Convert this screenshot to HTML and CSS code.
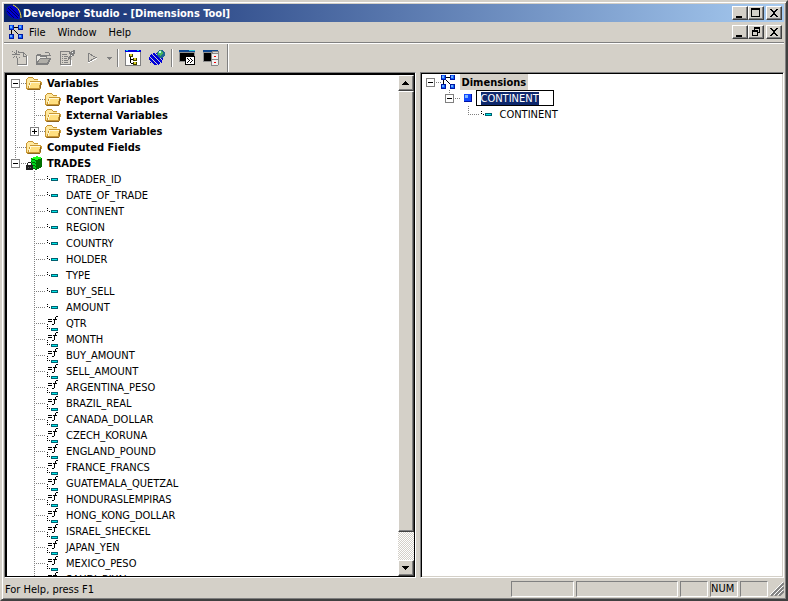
FILE: index.html
```html
<!DOCTYPE html>
<html lang="en">
<head>
    <meta charset="UTF-8">
    <meta name="viewport" content="width=device-width, initial-scale=1.0">
    <title>Developer Studio - [Dimensions Tool]</title>
    <link rel="stylesheet" href="styles.css">
</head>
<body>
    <!-- shared tree icons -->
    <svg class="sprite" aria-hidden="true">
        <symbol id="folder" viewBox="1 0 16 16">
            <path d="M1 14V4l2-2h4l2 2h4v2h2l2 1-1 6-1 2H2z" fill="#c89632"/>
            <path d="M2 13V4l1-1h4l2 2h4v1H5L3 13z" fill="#ffe9a0"/>
            <path d="M5 7h10l-1 6H4z" fill="#ffdf80"/>
            <path d="M5 7h10v1H6l-1 5H4z" fill="#fff8d8"/>
            <path d="M3 14h12v1H3zM15 8h1v5h-1z" fill="#8c6420"/>
        </symbol>
        <symbol id="dims" viewBox="0 -1 16 16">
            <path d="M5 2h5v1H5zM2 5h1v5H2zM5 5h1v1H5zM6 6h1v1H6zM7 7h1v1H7zM8 8h1v1H8zM9 9h1v1H9z" fill="#000"/>
            <path d="M0 0h5v5H0zM9 0h5v5H9zM0 9h5v5H0zM9 9h5v5H9z" fill="#0018a0"/>
            <path d="M1 0h3v4H1zM10 0h3v4h-3zM1 10h3v3H1zM10 10h3v3h-3z" fill="#1060ff"/>
            <path d="M1 1h2v2H1zM10 1h2v2h-2zM1 10h2v2H1zM10 10h2v2h-2z" fill="#68b0ff"/>
        </symbol>
        <symbol id="field" viewBox="0 0 16 16">
            <path d="M2 5h1v1H2zM2 7h1v1H2zM4 8h1v1H4z" fill="#000"/>
            <path d="M6 7h7v3H6z" fill="#006070"/>
            <path d="M7 8h5v1H7z" fill="#00e8e8"/>
        </symbol>
        <symbol id="func" viewBox="0 -1 16 16">
            <path d="M3 3h4v1H3zM3 5h4v1H3zM11 0h2v1h-2zM10 1h1v2h-1zM8 3h4v1H8zM9 4h1v4H9zM7 8h2v1H7zM2 8h1v1H2zM2 10h1v1H2zM2 12h1v1H2zM4 12h1v1H4z" fill="#000"/>
            <path d="M6 12h7v3H6z" fill="#006070"/>
            <path d="M7 13h5v1H7z" fill="#00e8e8"/>
        </symbol>
        <symbol id="trades" viewBox="0 0 16 16">
            <path d="M5 3l6-2 5 2v9l-6 3-5-2z" fill="#007000"/>
            <path d="M5 3l6-2 5 2-6 2z" fill="#20ff20"/>
            <path d="M5 4l5 2v2L5 6zM5 7l5 2v2L5 9zM5 10l5 2v2l-5-2z" fill="#00d820"/>
            <path d="M0 10h7v5H0zM1 8h1v2H1zM5 8h1v2H5zM2 7h3v1H2z" fill="#202020"/>
            <path d="M2 12h1v1H2zM4 12h1v1H4z" fill="#666"/>
        </symbol>
        <symbol id="cube" viewBox="0 0 16 16">
            <path d="M4 4h8v8H4z" fill="#0010a0"/>
            <path d="M4 4h7v7H4z" fill="#1048ff"/>
            <path d="M5 5h3v3H5z" fill="#80b8ff"/>
        </symbol>
        <symbol id="close" viewBox="0 0 12 10">
            <path d="M2 1h2v1h1v1h2V2h1V1h2v1H9v1H8v1H7v2h1v1h1v1h1v1H8V8H7V7H5v1H4v1H2V8h1V7h1V6h1V4H4V3H3V2H2z"/>
        </symbol>
        <symbol id="minimize" viewBox="0 0 12 10"><path d="M2 8h6v2H2z"/></symbol>
    </svg>

    <div class="window">
        <header class="titlebar">
            <svg class="app-icon" viewBox="0 0 18 18" aria-hidden="true">
                <path d="M2 4c2-4 8-3 11 2 2 4 2 8 1 9C7 15-1 11 2 4z" fill="#0000d0"/>
                <path d="M3 4l10 10M5 3l9 9M2 7l7 7" stroke="#000058"/>
                <path d="M8 1c5 2 8 7 8 13" stroke="#ffe040" fill="none"/>
            </svg>
            <h1>Developer Studio - [Dimensions Tool]</h1>
            <div class="window-buttons">
                <button class="raised" aria-label="Minimize"><svg><use href="#minimize"/></svg></button>
                <button class="raised" aria-label="Maximize"><svg viewBox="0 0 12 10"><path d="M1 0h9v9H1zM2 2v6h7V2z" fill-rule="evenodd"/></svg></button>
                <button class="raised close" aria-label="Close"><svg><use href="#close"/></svg></button>
            </div>
        </header>

        <nav class="menubar">
            <svg class="menu-icon" aria-hidden="true"><use href="#dims"/></svg>
            <a href="#">File</a>
            <a href="#">Window</a>
            <a href="#">Help</a>
            <div class="window-buttons">
                <button class="raised" aria-label="Minimize document"><svg><use href="#minimize"/></svg></button>
                <button class="raised" aria-label="Restore document"><svg viewBox="0 0 12 10"><path d="M4 0h6v6H8v3H2V3h2zM5 2v1h3v2h1V2zM3 5v3h4V5z" fill-rule="evenodd"/></svg></button>
                <button class="raised close" aria-label="Close document"><svg><use href="#close"/></svg></button>
            </div>
        </nav>

        <div class="toolbar">
            <div class="tools">
                <button aria-label="New"><svg viewBox="0 0 16 16">
                    <path d="M6 2h6v1H6zM12 3h1v1h-1zM13 4h1v1h-1zM14 5h1v10h-1zM5 14h9v1H5zM5 8h1v6H5zM11 3h1v3h2v1h-3z" fill="#808080"/>
                    <path d="M6 15h10v1H6zM15 6h1v9h-1z" fill="#fff"/>
                    <path d="M0 1h1v1H0zM2 2h1v1H2zM4 0h1v3H4zM6 1h1v1H6zM0 4h3v1H0zM5 4h3v1H5zM3 3h2v2H3zM1 7h1v1H1zM2 6h1v1H2zM4 6h1v2H4zM7 7h1v1H7z" fill="#808080"/>
                </svg></button>
                <button aria-label="Open"><svg viewBox="0 0 16 16">
                    <path d="M0 5h1V4h4v1h6v3h4v1l-3 6H0z" fill="#808080"/>
                    <path d="M1 6h3v1h6v1H4L1 12z" fill="#e8e6e0"/>
                    <path d="M4 9h9l-2 4H2z" fill="#b0aea8"/>
                    <path d="M9 2h4v1h1v2h1v1h-4V5h2V3H9z" fill="#808080"/>
                </svg></button>
                <button aria-label="Properties"><svg viewBox="0 0 16 16">
                    <path d="M0 1h10v1H0zM0 2h1v13H0zM0 14h11v1H0zM10 9h1v6h-1z" fill="#808080"/>
                    <path d="M2 4h5v1H2zM2 6h1v1H2zM4 6h4v1H4zM2 8h1v1H2zM4 8h3v1H4zM2 10h1v1H2zM4 10h4v1H4zM2 12h1v1H2zM4 12h4v1H4z" fill="#808080"/>
                    <path d="M9 2h2V1h2V0h2v4h-1v2h-2v1h-1v2H9v1H8V7h1V6h1V4H9z" fill="#808080"/>
                    <path d="M12 2h1v1h-1zM11 5h1v1h-1zM11 10h1v6h-1zM1 15h10v1H1z" fill="#fff"/>
                </svg></button>
                <button aria-label="Run"><svg viewBox="0 0 16 16">
                    <path d="M4 4v9l9-4.500" stroke="#fff" fill="none"/>
                    <path d="M4 3v9l8-4.500z" stroke="#808080" fill="none"/>
                </svg></button>
                <button class="drop" aria-label="Run options"><svg viewBox="0 0 7 16"><path d="M1 7h5v1H5v1H4v1H3V9H2V8H1z" fill="#808080"/></svg></button>
                <span class="sep"></span>
                <button aria-label="Tree view"><svg viewBox="0 0 16 16">
                    <path d="M0 0h16v16H0z" fill="#808080"/><path d="M1 2h14v13H1z" fill="#fff"/>
                    <path d="M0 0h16v2H0z" fill="#0000e0"/><path d="M1 0h2v1H1zM12 0h2v1h-2z" fill="#00d8e8"/>
                    <path d="M5 7h1v6H5zM6 9h2v1H6zM6 13h2v1H6z" fill="#000"/>
                    <path d="M4 4h4v3H4zM8 8h4v3H8zM8 12h4v3H8z" fill="#404000"/><path d="M5 4h2v2H5zM9 8h2v2H9zM9 12h2v2H9z" fill="#d8d020"/>
                </svg></button>
                <button aria-label="Web"><svg viewBox="0 0 16 16">
                    <ellipse cx="7" cy="9" rx="7" ry="6" fill="#0000d8"/>
                    <path d="M0 6l9 9M3 4l10 10M0 10l6 6M6 3l8 8" stroke="#d4d0c8"/>
                    <circle cx="12" cy="4" r="4" fill="#206890"/>
                    <path d="M9 2l3-2 2 3-2 3-3-1z" fill="#48b858"/>
                    <path d="M10 1h2v2h-2z" fill="#b8f8f0"/>
                </svg></button>
                <span class="sep"></span>
                <button aria-label="Console"><svg viewBox="0 0 16 16">
                    <path d="M0 0h16v12H0z" fill="#909090"/><path d="M0 0h16v2H0z" fill="#104890"/><path d="M10 0h6v1h-6z" fill="#30c8d8"/>
                    <path d="M1 3h14v8H1z" fill="#000"/>
                    <path d="M6 6h10v9H6z" fill="#000"/><path d="M7 7h8v7H7z" fill="#fff"/>
                    <path d="M8 8h1v1H8zM9 9h1v1H9zM10 10h1v1h-1zM9 11h1v1H9zM8 12h1v1H8zM11 8h1v1h-1zM12 9h1v1h-1zM13 10h1v1h-1zM12 11h1v1h-1zM11 12h1v1h-1z" fill="#000"/>
                </svg></button>
                <button aria-label="Server"><svg viewBox="0 0 16 16">
                    <path d="M0 0h15v12H0z" fill="#909090"/><path d="M0 0h15v2H0z" fill="#104890"/>
                    <path d="M1 3h8v8H1z" fill="#000"/>
                    <path d="M8 2l2-1h6v13l-2 2H8z" fill="#888"/><path d="M9 4h6v5H9zM9 10h6v5H9z" fill="#f0f0f0"/><path d="M10 2h5v1h-5z" fill="#d8d8d8"/>
                    <path d="M11 6h2v1h-2zM11 12h2v1h-2z" fill="#f00000"/>
                </svg></button>
            </div>
        </div>

        <main class="panes">
            <section class="pane fields-pane" aria-label="Fields">
                <ul class="tree">
                    <li>
                        <div class="row bold"><span class="twig"><button class="toggle" aria-label="Collapse"></button></span><svg><use href="#folder"/></svg><span>Variables</span></div>
                        <ul>
                            <li><div class="row bold"><span class="twig"></span><svg><use href="#folder"/></svg><span>Report Variables</span></div></li>
                            <li><div class="row bold"><span class="twig"></span><svg><use href="#folder"/></svg><span>External Variables</span></div></li>
                            <li><div class="row bold"><span class="twig"><button class="toggle plus" aria-label="Expand"></button></span><svg><use href="#folder"/></svg><span>System Variables</span></div></li>
                        </ul>
                    </li>
                    <li><div class="row bold"><span class="twig"></span><svg><use href="#folder"/></svg><span>Computed Fields</span></div></li>
                    <li>
                        <div class="row bold"><span class="twig"><button class="toggle" aria-label="Collapse"></button></span><svg><use href="#trades"/></svg><span>TRADES</span></div>
                        <ul>
                            <li><div class="row"><span class="twig"></span><svg><use href="#field"/></svg><span>TRADER_ID</span></div></li>
                            <li><div class="row"><span class="twig"></span><svg><use href="#field"/></svg><span>DATE_OF_TRADE</span></div></li>
                            <li><div class="row"><span class="twig"></span><svg><use href="#field"/></svg><span>CONTINENT</span></div></li>
                            <li><div class="row"><span class="twig"></span><svg><use href="#field"/></svg><span>REGION</span></div></li>
                            <li><div class="row"><span class="twig"></span><svg><use href="#field"/></svg><span>COUNTRY</span></div></li>
                            <li><div class="row"><span class="twig"></span><svg><use href="#field"/></svg><span>HOLDER</span></div></li>
                            <li><div class="row"><span class="twig"></span><svg><use href="#field"/></svg><span>TYPE</span></div></li>
                            <li><div class="row"><span class="twig"></span><svg><use href="#field"/></svg><span>BUY_SELL</span></div></li>
                            <li><div class="row"><span class="twig"></span><svg><use href="#field"/></svg><span>AMOUNT</span></div></li>
                            <li><div class="row"><span class="twig"></span><svg><use href="#func"/></svg><span>QTR</span></div></li>
                            <li><div class="row"><span class="twig"></span><svg><use href="#func"/></svg><span>MONTH</span></div></li>
                            <li><div class="row"><span class="twig"></span><svg><use href="#func"/></svg><span>BUY_AMOUNT</span></div></li>
                            <li><div class="row"><span class="twig"></span><svg><use href="#func"/></svg><span>SELL_AMOUNT</span></div></li>
                            <li><div class="row"><span class="twig"></span><svg><use href="#func"/></svg><span>ARGENTINA_PESO</span></div></li>
                            <li><div class="row"><span class="twig"></span><svg><use href="#func"/></svg><span>BRAZIL_REAL</span></div></li>
                            <li><div class="row"><span class="twig"></span><svg><use href="#func"/></svg><span>CANADA_DOLLAR</span></div></li>
                            <li><div class="row"><span class="twig"></span><svg><use href="#func"/></svg><span>CZECH_KORUNA</span></div></li>
                            <li><div class="row"><span class="twig"></span><svg><use href="#func"/></svg><span>ENGLAND_POUND</span></div></li>
                            <li><div class="row"><span class="twig"></span><svg><use href="#func"/></svg><span>FRANCE_FRANCS</span></div></li>
                            <li><div class="row"><span class="twig"></span><svg><use href="#func"/></svg><span>GUATEMALA_QUETZAL</span></div></li>
                            <li><div class="row"><span class="twig"></span><svg><use href="#func"/></svg><span>HONDURASLEMPIRAS</span></div></li>
                            <li><div class="row"><span class="twig"></span><svg><use href="#func"/></svg><span>HONG_KONG_DOLLAR</span></div></li>
                            <li><div class="row"><span class="twig"></span><svg><use href="#func"/></svg><span>ISRAEL_SHECKEL</span></div></li>
                            <li><div class="row"><span class="twig"></span><svg><use href="#func"/></svg><span>JAPAN_YEN</span></div></li>
                            <li><div class="row"><span class="twig"></span><svg><use href="#func"/></svg><span>MEXICO_PESO</span></div></li>
                            <li class="more"><div class="row"><span class="twig"></span><svg><use href="#func"/></svg><span>SAUDI_RIYAL</span></div></li>
                        </ul>
                    </li>
                </ul>
                <div class="scrollbar">
                    <button class="raised" aria-label="Scroll up"><svg viewBox="0 0 7 4"><path d="M3 0h1v1h1v1h1v1h1v1H0V3h1V2h1V1h1z"/></svg></button>
                    <div class="thumb raised"></div>
                    <div class="track"></div>
                    <button class="raised" aria-label="Scroll down"><svg viewBox="0 0 7 4"><path d="M0 0h7v1H6v1H5v1H4v1H3V3H2V2H1V1H0z"/></svg></button>
                </div>
            </section>

            <section class="pane dims-pane" aria-label="Dimensions">
                <ul class="tree">
                    <li>
                        <div class="row bold"><span class="twig"><button class="toggle" aria-label="Collapse"></button></span><svg><use href="#dims"/></svg><span class="inactive">Dimensions</span></div>
                        <ul>
                            <li>
                                <div class="row"><span class="twig"><button class="toggle" aria-label="Collapse"></button></span><svg><use href="#cube"/></svg><input class="rename" id="rename" type="text" value="CONTINENT" aria-label="Dimension name" spellcheck="false"></div>
                                <ul>
                                    <li><div class="row"><span class="twig"></span><svg><use href="#field"/></svg><span>CONTINENT</span></div></li>
                                </ul>
                            </li>
                        </ul>
                    </li>
                </ul>
            </section>
        </main>

        <footer class="statusbar">
            <span class="hint">For Help, press F1</span>
            <span class="cell medium"></span>
            <span class="cell wide"></span>
            <span class="cell"></span>
            <span class="cell">NUM</span>
            <span class="cell"></span>
            <svg class="grip" viewBox="0 0 14 14" aria-hidden="true">
                <path d="M1 14L14 1M5 14l9-9M9 14l5-5" stroke="#808080" stroke-width="2"/>
                <path d="M0 13L13 0M4 13l9-9M8 13l5-5" stroke="#fff"/>
            </svg>
        </footer>
    </div>

    <script>
        const rename = document.getElementById('rename');
        rename.focus();
        rename.select();
    </script>
</body>
</html>
```
FILE: styles.css
```css
* {
    box-sizing: border-box;
}
body {
    margin: 0;
    font-family: "DejaVu Sans Condensed", Tahoma, sans-serif;
    font-size: 11px;
    line-height: 14px;
    color: #000;
    background: #d4d0c8;
}
button,
input {
    font: inherit;
    margin: 0;
    padding: 0;
    border: none;
    border-radius: 0;
    background: none;
}
svg {
    display: block;
    flex: none;
    shape-rendering: crispEdges;
}
.sprite {
    display: none;
}
.window {
    display: flex;
    flex-direction: column;
    height: 100vh;
    padding: 2px;
    border: 2px solid;
    border-color: #d4d0c8 #404040 #404040 #d4d0c8;
    box-shadow: inset 1px 1px #fff, inset -1px -1px #808080;
}
.raised {
    background: #d4d0c8;
    border: 1px solid;
    border-color: #fff #404040 #404040 #fff;
    box-shadow: inset -1px -1px #808080;
}

/* title and menu */
.titlebar {
    display: flex;
    align-items: center;
    height: 18px;
    padding: 0 2px 0 1px;
    color: #fff;
    background: linear-gradient(to right, #0a246a, #a6caf0);
}
.titlebar h1 {
    margin: 0;
    padding-top: 2px;
    font-size: 11px;
    font-weight: bold;
}
.app-icon {
    width: 18px;
    height: 18px;
    shape-rendering: auto;
}
.window-buttons {
    display: flex;
    margin-left: auto;
}
.window-buttons button {
    width: 16px;
    height: 14px;
}
.window-buttons .close {
    margin-left: 2px;
}
.window-buttons svg {
    width: 12px;
    height: 10px;
    margin: 0 1px;
}
.menubar {
    display: flex;
    align-items: center;
    height: 21px;
    padding: 0 2px 0 5px;
    border-bottom: 1px solid #808080;
}
.menubar a {
    margin-right: 12px;
    padding-top: 2px;
    color: #000;
    text-decoration: none;
}
.menu-icon {
    width: 16px;
    height: 16px;
    margin-right: 4px;
}

/* toolbar */
.toolbar {
    display: flex;
    height: 29px;
    border-top: 1px solid #fff;
}
.tools {
    display: flex;
    align-items: center;
    padding: 0 4px;
    border-right: 1px solid #808080;
    box-shadow: 1px 0 #fff;
}
.tools button {
    padding: 0 4px;
}
.tools svg {
    width: 16px;
    height: 16px;
}
.tools .drop {
    padding: 0 2px;
}
.tools .drop svg {
    width: 7px;
}
.sep {
    width: 2px;
    height: 18px;
    margin: 0 2px;
    border-left: 1px solid #808080;
    border-right: 1px solid #fff;
}

/* panes */
.panes {
    display: flex;
    flex: 1;
    gap: 4px;
    min-height: 0;
}
.pane {
    display: flex;
    min-width: 0;
    background: #fff;
    border: 1px solid;
    border-color: #808080 #fff #fff #808080;
    overflow: hidden;
}
.fields-pane {
    flex: 53;
    box-shadow: inset 2px 2px #000, inset -1px -1px #000;
    padding: 2px 1px 1px 2px;
}
.dims-pane {
    flex: 47;
    box-shadow: inset 1px 1px #000, inset -1px -1px #d4d0c8;
    padding: 1px;
}

/* tree */
.tree {
    flex: 1;
    min-width: 0;
    overflow: hidden;
}
.tree,
.tree ul {
    margin: 0;
    padding: 0;
    list-style: none;
}
.tree ul {
    padding-left: 19px;
}
.tree li {
    background: repeating-linear-gradient(to bottom, #808080 0 1px, transparent 1px 2px) 8px 0 / 1px 100% no-repeat;
}
.tree li:last-child {
    background-size: 1px 8px;
}
.tree li.more {
    background-size: 1px 100%;
}
.tree > li:first-child {
    background-position: 8px 8px;
}
.tree > li:only-child {
    background: none;
}
.row {
    display: flex;
    align-items: center;
    height: 16px;
    white-space: nowrap;
}
.row svg {
    width: 16px;
    height: 16px;
}
.row > span:last-child {
    margin-left: 3px;
    padding: 2px 2px 0;
}
.bold {
    font-weight: bold;
}
.twig {
    flex: none;
    width: 19px;
    height: 16px;
    padding: 4px;
    background: repeating-linear-gradient(to right, #808080 0 1px, transparent 1px 2px) 8px 8px / 11px 1px no-repeat;
}
.toggle {
    display: block;
    width: 9px;
    height: 9px;
    border: 1px solid #808080;
    background: linear-gradient(#000, #000) center / 5px 1px no-repeat, #fff;
}
.toggle.plus {
    background: linear-gradient(#000, #000) center / 5px 1px no-repeat, linear-gradient(#000, #000) center / 1px 5px no-repeat, #fff;
}
.inactive {
    background: #d4d0c8;
}
.rename {
    width: 78px;
    height: 16px;
    padding: 0 4px;
    border: 1px solid #000;
    background: #fff;
    outline: none;
}
.rename::selection {
    color: #fff;
    background: rgba(10, 36, 106, 0.99);
}

/* scrollbar */
.scrollbar {
    display: flex;
    flex-direction: column;
    width: 16px;
}
.scrollbar button {
    display: flex;
    align-items: center;
    justify-content: center;
    height: 16px;
}
.scrollbar svg {
    width: 7px;
    height: 4px;
}
.thumb {
    flex: 94;
}
.track {
    flex: 6;
    background: repeating-conic-gradient(#d4d0c8 0 25%, #fff 0 50%) 0 0 / 2px 2px;
}

/* status bar */
.statusbar {
    display: flex;
    align-items: center;
    gap: 2px;
    height: 19px;
    padding-top: 3px;
}
.hint {
    flex: 1;
    padding: 2px 0 0 1px;
}
.cell {
    width: 28px;
    height: 16px;
    border: 1px solid;
    border-color: #808080 #fff #fff #808080;
}
.cell.medium {
    width: 63px;
}
.cell.wide {
    width: 102px;
}
.grip {
    width: 14px;
    height: 14px;
    shape-rendering: auto;
}
```
